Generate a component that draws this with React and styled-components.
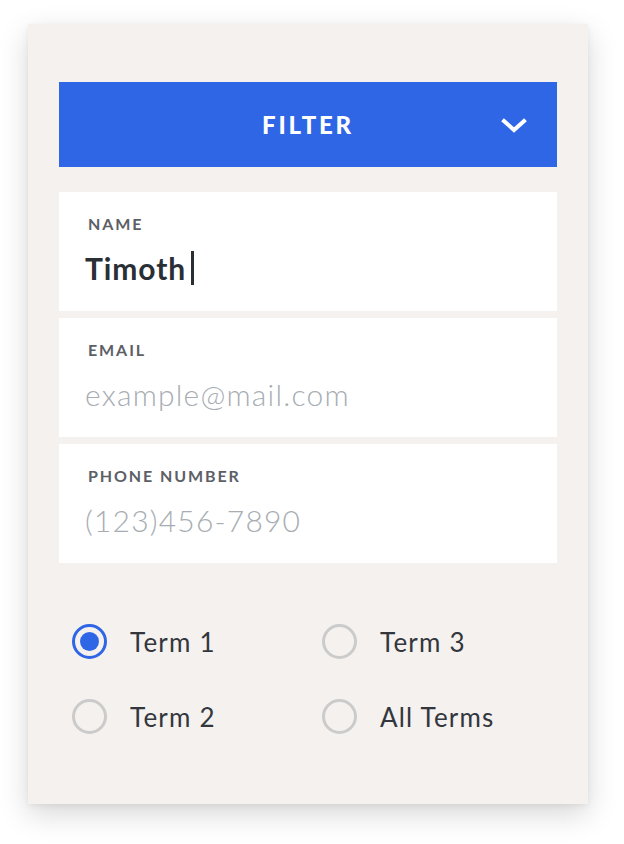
import React from "react";
import styled, { createGlobalStyle } from "styled-components";

const Global = createGlobalStyle`
  html, body { margin: 0; padding: 0; background: #ffffff; }
  body { font-family: Lato, "Noto Sans", sans-serif; }
  * { box-sizing: border-box; }
`;

const Page = styled.div`
  width: 624px;
  height: 844px;
  padding: 24px 0 0 28px;
`;

const Card = styled.section`
  width: 560px;
  height: 780px;
  background: #f5f1ee;
  box-shadow: 0 10px 28px rgba(0, 0, 0, 0.16), 0 2px 6px rgba(0, 0, 0, 0.06);
  padding: 58px 31px 0 31px;
  display: flex;
  flex-direction: column;
`;

const FilterBar = styled.button`
  position: relative;
  width: 498px;
  height: 85px;
  border: none;
  background: #2f66e6;
  color: #ffffff;
  font-family: Lato, sans-serif;
  font-weight: 900;
  font-size: 24px;
  letter-spacing: 2.8px;
  display: flex;
  align-items: center;
  justify-content: center;
  padding: 0;
  margin-bottom: 25px;
`;

const Chevron = styled.svg`
  position: absolute;
  right: 30px;
  top: 36px;
`;

const Fields = styled.div`
  display: flex;
  flex-direction: column;
  gap: 7px;
`;

const Field = styled.div`
  width: 498px;
  height: 119px;
  background: #ffffff;
  padding: 23px 27px 0 29px;
  display: flex;
  flex-direction: column;
`;

const Label = styled.div`
  font-family: Lato, sans-serif;
  font-size: 16px;
  font-weight: 700;
  letter-spacing: 1.9px;
  color: #5c6066;
  line-height: 18px;
  margin-bottom: 17px;
`;

const Value = styled.div`
  font-family: Lato, sans-serif;
  font-size: 30px;
  line-height: 36px;
  margin-left: -3px;
  font-weight: ${(p) => (p.$placeholder ? 300 : 700)};
  color: ${(p) => (p.$placeholder ? "#a7adb2" : "#2a2f36")};
  letter-spacing: ${(p) => (p.$placeholder ? "1.2px" : "0.9px")};
  display: flex;
  align-items: center;
`;

const Caret = styled.span`
  display: inline-block;
  width: 2.5px;
  height: 34px;
  background: #2a2f36;
  margin-left: 5px;
`;

const Terms = styled.div`
  display: grid;
  grid-template-columns: 250px 250px;
  row-gap: 40px;
  padding: 61px 0 0 13px;
`;

const Term = styled.label`
  display: flex;
  align-items: center;
  gap: 23px;
  height: 35px;
  font-family: Lato, sans-serif;
  font-size: 26px;
  color: #33373d;
  letter-spacing: 1.2px;
`;

const Radio = styled.span`
  width: 35px;
  height: 35px;
  border-radius: 50%;
  border: 3px solid ${(p) => (p.$checked ? "#2f66e6" : "#cbcbcb")};
  display: flex;
  align-items: center;
  justify-content: center;
  flex: none;
  &::after {
    content: "";
    width: 19px;
    height: 19px;
    border-radius: 50%;
    background: ${(p) => (p.$checked ? "#2f66e6" : "transparent")};
  }
`;

export default function App() {
  return (
    <>
      <Global />
      <Page>
        <Card>
          <FilterBar>
            FILTER
            <Chevron width="26" height="16" viewBox="0 0 26 16">
              <path d="M3 3 L13 12 L23 3" fill="none" stroke="#fff" strokeWidth="4" strokeLinecap="square" />
            </Chevron>
          </FilterBar>
          <Fields>
            <Field>
              <Label>NAME</Label>
              <Value>
                Timoth
                <Caret />
              </Value>
            </Field>
            <Field>
              <Label>EMAIL</Label>
              <Value $placeholder>example@mail.com</Value>
            </Field>
            <Field>
              <Label>PHONE NUMBER</Label>
              <Value $placeholder>(123)456-7890</Value>
            </Field>
          </Fields>
          <Terms>
            <Term>
              <Radio $checked />
              Term 1
            </Term>
            <Term>
              <Radio />
              Term 3
            </Term>
            <Term>
              <Radio />
              Term 2
            </Term>
            <Term>
              <Radio />
              All Terms
            </Term>
          </Terms>
        </Card>
      </Page>
    </>
  );
}
